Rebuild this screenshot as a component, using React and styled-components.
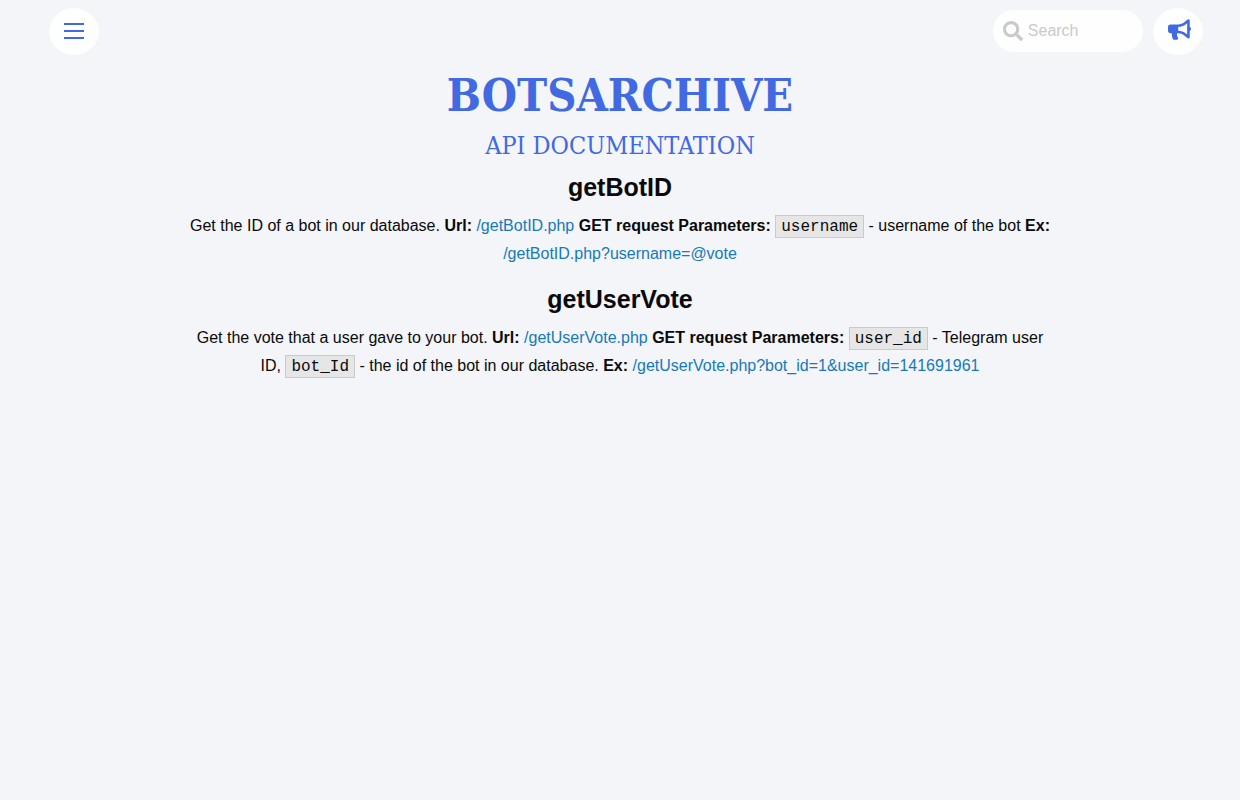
import React, { useState } from "react";
import styled, { createGlobalStyle } from "styled-components";
import { FaBullhorn, FaSearch } from "react-icons/fa";

const GlobalStyle = createGlobalStyle`
  * {
    box-sizing: border-box;
  }
  body {
    margin: 0;
    background-color: #f3f5f9;
    color: #0a0a0a;
    font-family: "Liberation Sans", Arial, sans-serif;
    font-size: 16px;
  }
`;

const Header = styled.header`
  display: flex;
  align-items: center;
  gap: 10px;
  padding: 8px 3% 0 49px;
`;

const RoundButton = styled.button`
  display: grid;
  place-items: center;
  width: 50px;
  height: 47px;
  padding: ${(props) => props.$padding || "0 0 2px"};
  border: none;
  border-radius: 50%;
  background-color: #fefefe;
  color: royalblue;
  cursor: pointer;
`;

const SearchBox = styled.label`
  display: flex;
  align-items: center;
  gap: 5px;
  width: 150px;
  height: 42px;
  margin: 0 0 2px auto;
  padding: 0 10px;
  border-radius: 21px;
  background-color: #fefefe;
  color: #cacaca;

  svg {
    flex: none;
  }
`;

const SearchInput = styled.input`
  width: 100%;
  min-width: 0;
  padding: 0;
  border: none;
  outline: none;
  background: none;
  color: #0a0a0a;
  font: inherit;

  &::placeholder {
    color: #cacaca;
    opacity: 1;
  }
`;

const Main = styled.main`
  width: 70%;
  margin: 0 auto;
  text-align: center;
`;

const Title = styled.h1`
  margin: 6px 0 0;
  color: royalblue;
  font-family: "Roboto Slab", "DejaVu Serif Condensed", "DejaVu Serif", serif;
  font-size: 45px;
  font-weight: bold;
  line-height: 70px;
`;

const Subtitle = styled.p`
  margin: 0;
  color: royalblue;
  font-family: "Roboto Slab", "DejaVu Serif Condensed", "DejaVu Serif", serif;
  font-size: 25px;
  font-weight: 300;
  line-height: 30px;
`;

const Method = styled.section`
  margin-bottom: 13px;

  h2 {
    margin: 8px 0 7px;
    font-size: 25px;
    line-height: 36px;
  }
  p {
    margin: 0;
    line-height: 28px;
  }
`;

const Link = styled.a`
  color: #1779ba;
  text-decoration: none;

  &:hover {
    color: #1468a0;
  }
`;

const Code = styled.code`
  padding: 2px 5px 1px;
  border: 1px solid #cacaca;
  background-color: #e6e6e6;
  font-family: "Liberation Mono", "Courier New", monospace;
  font-size: 16px;
  line-height: 1;
`;

const MenuIcon = () => (
  <svg width="20" height="16" viewBox="0 0 20 16" aria-hidden="true">
    <path d="M0 1h20M0 8h20M0 15h20" stroke="currentColor" strokeWidth="2" />
  </svg>
);

const App = () => {
  const [query, setQuery] = useState("");

  return (
    <>
      <GlobalStyle />
      <Header>
        <RoundButton type="button" aria-label="Menu">
          <MenuIcon />
        </RoundButton>
        <SearchBox>
          <FaSearch size={20} aria-hidden="true" />
          <SearchInput
            type="text"
            placeholder="Search"
            aria-label="Search"
            value={query}
            onChange={(e) => setQuery(e.target.value)}
          />
        </SearchBox>
        <RoundButton type="button" aria-label="News" $padding="0 0 4px 4px">
          <FaBullhorn size={23} />
        </RoundButton>
      </Header>
      <Main>
        <Title>BOTSARCHIVE</Title>
        <Subtitle>API DOCUMENTATION</Subtitle>
        <Method>
          <h2>getBotID</h2>
          <p>
            Get the ID of a bot in our database. <b>Url:</b>{" "}
            <Link href="/getBotID.php">/getBotID.php</Link>{" "}
            <b>GET request</b> <b>Parameters:</b> <Code>username</Code> -
            username of the bot <b>Ex:</b>{" "}
            <Link href="/getBotID.php?username=@vote">
              /getBotID.php?username=@vote
            </Link>
          </p>
        </Method>
        <Method>
          <h2>getUserVote</h2>
          <p>
            Get the vote that a user gave to your bot. <b>Url:</b>{" "}
            <Link href="/getUserVote.php">/getUserVote.php</Link>{" "}
            <b>GET request</b> <b>Parameters:</b> <Code>user_id</Code> -
            Telegram user ID, <Code>bot_Id</Code> - the id of the bot in our
            database. <b>Ex:</b>{" "}
            <Link href="/getUserVote.php?bot_id=1&user_id=141691961">
              /getUserVote.php?bot_id=1&amp;user_id=141691961
            </Link>
          </p>
        </Method>
      </Main>
    </>
  );
};

export default App;
